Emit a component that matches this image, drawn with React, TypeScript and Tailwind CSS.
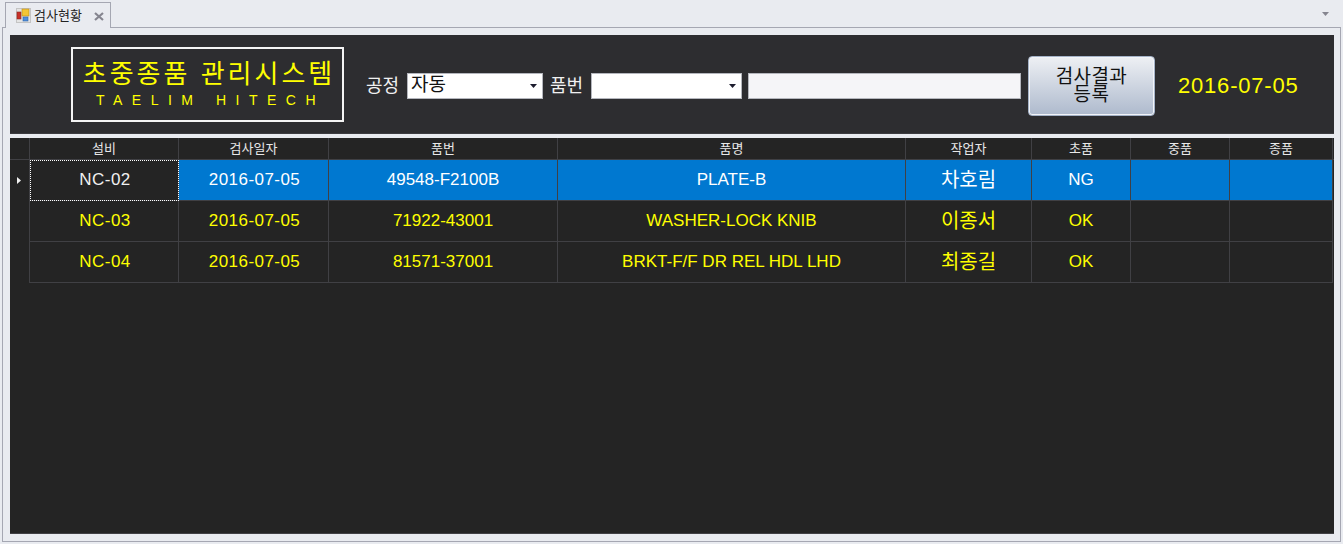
const FONT = "font-['Liberation_Sans','Noto_Sans_CJK_KR',sans-serif]";

const columns = ["설비", "검사일자", "품번", "품명", "작업자", "초품", "중품", "종품"];

const rows = [
  ["NC-02", "2016-07-05", "49548-F2100B", "PLATE-B", "차호림", "NG", "", ""],
  ["NC-03", "2016-07-05", "71922-43001", "WASHER-LOCK KNIB", "이종서", "OK", "", ""],
  ["NC-04", "2016-07-05", "81571-37001", "BRKT-F/F DR REL HDL LHD", "최종길", "OK", "", ""],
];

const gridCols = "grid grid-cols-[20px_149px_150px_229px_348px_126px_99px_99px_103px]";

function TabIcon() {
  return (
    <svg width="15" height="15" viewBox="0 0 15 15" className="mr-[3px] shrink-0">
      <rect x="0.5" y="0.5" width="14" height="14" fill="#e4e4e4" stroke="#c4c4c4" />
      <rect x="1" y="4" width="4" height="7" fill="#c8312a" stroke="#8a2a20" strokeWidth="0.6" />
      <rect x="6" y="1" width="7" height="7" fill="#f4c534" stroke="#b88a1a" strokeWidth="0.6" />
      <rect x="7" y="9" width="5" height="4" fill="#4f8fdc" stroke="#2f64a8" strokeWidth="0.6" />
    </svg>
  );
}

function Caret({ color = "#1c1c2e" }: { color?: string }) {
  return (
    <svg width="7" height="4" viewBox="0 0 7 4" className="shrink-0">
      <path d="M0 0h7L3.5 4z" fill={color} />
    </svg>
  );
}

function Combo({ width, value }: { width: string; value?: string }) {
  return (
    <div className={`${width} h-[26px] bg-white border border-[#b4b6bd] flex items-start justify-between pr-[5px] pl-[3px] text-[#111] text-[19px] leading-[22px]`}>
      <span>{value}</span>
      <span className="mt-[10px]">
        <Caret />
      </span>
    </div>
  );
}

function Toolbar() {
  return (
    <div className="h-[99px] pt-[4px] bg-[#2d2d30] flex items-center border-b border-[#3c3c40]">
      <div className="ml-[61px] mb-[4px] w-[273px] h-[75px] border-2 border-[#f4f4f4] flex flex-col items-center pt-[10px]">
        <div className="text-[#ffff00] text-[26px] leading-[30px] pl-[3px] tracking-[3px] whitespace-nowrap">초중종품 관리시스템</div>
        <div className="text-[#ffff00] text-[14px] leading-[16px] mt-[3px] pl-[6px] tracking-[9.5px] whitespace-nowrap">TAELIM HITECH</div>
      </div>
      <span className="ml-[22px] w-[41px] text-[#f0f0f0] text-[18px]">공정</span>
      <Combo width="w-[136px]" value="자동" />
      <span className="ml-[7px] w-[41px] text-[#f0f0f0] text-[18px]">품번</span>
      <Combo width="w-[151px]" />
      <div className="ml-[6px] w-[273px] h-[26px] bg-[#f5f5f8] border border-[#b4b6bd]" />
      <div className="ml-[7px] w-[127px] h-[60px] rounded-[4px] border border-[#a5b3c8] bg-gradient-to-b from-[#eef0f4] to-[#aebacd] flex flex-col items-center justify-center text-[#111] text-[19px] leading-[18px] tracking-[0.4px] shadow-[inset_0_0_0_1px_#f2f4f8]">
        <span>검사결과</span>
        <span>등록</span>
      </div>
      <div className="ml-[23px] text-[#ffff00] text-[22px] leading-[24px] tracking-[0.8px] whitespace-nowrap">2016-07-05</div>
    </div>
  );
}

function HeaderRow() {
  return (
    <div className={`${gridCols} h-[22px] border-b border-[#404044]`}>
      <div className="border-r border-[#404044]" />
      {columns.map((c) => (
        <div key={c} className="border-r border-[#404044] text-center text-[#e8e8e8] text-[13px] leading-[21px]">
          {c}
        </div>
      ))}
    </div>
  );
}

function DataRow({ cells, selected }: { cells: string[]; selected: boolean }) {
  return (
    <div className={`${gridCols} h-[41px]`}>
      <div className="flex items-center justify-center border-r border-[#404044] pr-[1px]">
        {selected && (
          <svg width="4" height="7" viewBox="0 0 4 7">
            <path d="M0 0l4 3.5L0 7z" fill="#f0f0f0" />
          </svg>
        )}
      </div>
      {cells.map((cell, i) => {
        const active = selected && i === 0;
        const filled = selected && i > 0;
        const big = i === 4;
        const spaced = i < 2;
        return (
          <div
            key={i}
            className={`flex items-center justify-center border-r border-b border-[#404044] whitespace-nowrap ${big ? "text-[20px]" : "text-[17px]"} ${spaced ? "tracking-[0.45px] pl-[2px]" : ""} ${
              filled ? "bg-[#0078d0] text-white" : selected ? "text-[#f0f0f0]" : "text-[#ffff00]"
            } ${active ? "outline-dotted outline-1 -outline-offset-1 outline-white" : ""}`}
          >
            {cell}
          </div>
        );
      })}
    </div>
  );
}

export default function App() {
  return (
    <div className={`w-[1343px] h-[544px] bg-[#e9ebf0] overflow-hidden ${FONT}`}>
      {/* Tab strip */}
      <div className="h-[27px] pl-[5px] flex items-end justify-between relative z-10">
        <div className="w-[106px] h-[26px] -mb-[1px] bg-[#e9ebf0] border border-b-0 border-[#a5a7b2] flex items-center pl-[10px] text-[13px] text-[#222]">
          <TabIcon />
          <span>검사현황</span>
          <svg width="10" height="9" viewBox="0 0 10 9" className="ml-[12px] mt-[1px]">
            <path d="M1 1l8 7M9 1L1 8" stroke="#85858f" strokeWidth="2.2" />
          </svg>
        </div>
        <div className="mr-[14px] mb-[11px]">
          <Caret color="#85858f" />
        </div>
      </div>

      {/* Document area */}
      <div className="mx-[2px] h-[515px] border border-[#a5a7b2] bg-[#e9ebf0] pt-[7px] pl-[7px] pr-[6px]">
        <Toolbar />
        <div className="h-[4px]" />
        <div className="h-[396px] bg-[#242424] border-b border-[#404044]">
          <HeaderRow />
          {rows.map((r, i) => (
            <DataRow key={r[0]} cells={r} selected={i === 0} />
          ))}
        </div>
      </div>
    </div>
  );
}
